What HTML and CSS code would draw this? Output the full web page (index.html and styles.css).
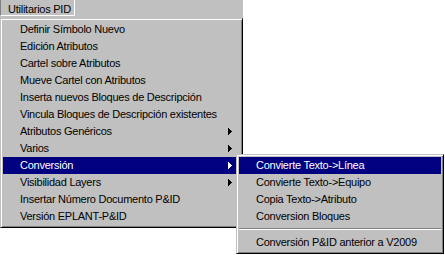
FILE: index.html
```html
<!DOCTYPE html>
<html lang="es">
<head>
<meta charset="utf-8">
<title>Utilitarios PID</title>
<link rel="stylesheet" href="styles.css">
</head>
<body>
<div class="screen">
  <div class="bar">
    <div class="bar-item">Utilitarios PID</div>
  </div>
  <div class="menu main-menu">
    <div class="item">Definir Símbolo Nuevo</div>
    <div class="item">Edición Atributos</div>
    <div class="item">Cartel sobre Atributos</div>
    <div class="item">Mueve Cartel con Atributos</div>
    <div class="item">Inserta nuevos Bloques de Descripción</div>
    <div class="item">Vincula Bloques de Descripción existentes</div>
    <div class="item">Atributos Genéricos<svg class="arrow" width="4" height="7" viewBox="0 0 4 7"><rect x="0" y="0" width="1" height="7"/><rect x="1" y="1" width="1" height="5"/><rect x="2" y="2" width="1" height="3"/><rect x="3" y="3" width="1" height="1"/></svg></div>
    <div class="item">Varios<svg class="arrow" width="4" height="7" viewBox="0 0 4 7"><rect x="0" y="0" width="1" height="7"/><rect x="1" y="1" width="1" height="5"/><rect x="2" y="2" width="1" height="3"/><rect x="3" y="3" width="1" height="1"/></svg></div>
    <div class="item active">Conversión<svg class="arrow" width="4" height="7" viewBox="0 0 4 7"><rect x="0" y="0" width="1" height="7"/><rect x="1" y="1" width="1" height="5"/><rect x="2" y="2" width="1" height="3"/><rect x="3" y="3" width="1" height="1"/></svg></div>
    <div class="item">Visibilidad Layers<svg class="arrow" width="4" height="7" viewBox="0 0 4 7"><rect x="0" y="0" width="1" height="7"/><rect x="1" y="1" width="1" height="5"/><rect x="2" y="2" width="1" height="3"/><rect x="3" y="3" width="1" height="1"/></svg></div>
    <div class="item">Insertar Número Documento P&amp;ID</div>
    <div class="item">Versión EPLANT-P&amp;ID</div>
  </div>
  <div class="menu sub-menu">
    <div class="item active">Convierte Texto-&gt;Línea</div>
    <div class="item">Convierte Texto-&gt;Equipo</div>
    <div class="item">Copia Texto-&gt;Atributo</div>
    <div class="item">Conversion Bloques</div>
    <div class="separator"></div>
    <div class="item">Conversión P&amp;ID anterior a V2009</div>
  </div>
</div>
</body>
</html>
```
FILE: styles.css
```css
html, body {
  margin: 0;
  padding: 0;
  background: #ffffff;
}

.screen {
  position: relative;
  width: 445px;
  height: 255px;
  overflow: hidden;
  background: #ffffff;
  font-family: "Liberation Sans", Arial, sans-serif;
  font-size: 11px;
  letter-spacing: -0.25px;
  color: #000000;
}

.bar {
  width: 243px;
  height: 18px;
  background: #c0c0c0;
}

.bar-item {
  box-sizing: border-box;
  width: 75px;
  height: 16px;
  padding: 3px 0 0 7px;
  line-height: 12px;
  border-left: 1px solid #808080;
  border-right: 1px solid #ffffff;
  border-bottom: 1px solid #ffffff;
  white-space: nowrap;
}

.menu {
  box-sizing: border-box;
  background: #c0c0c0;
  border: 1px solid;
  border-color: #c0c0c0 #000000 #000000 #c0c0c0;
  box-shadow: inset 1px 1px 0 #ffffff, inset -1px -1px 0 #808080;
  padding: 2px;
}

.main-menu {
  width: 243px;
}

.sub-menu {
  position: absolute;
  left: 236px;
  top: 154px;
  width: 208px;
}

.item {
  display: flex;
  align-items: center;
  height: 17px;
  line-height: 17px;
  padding-left: 17px;
  white-space: nowrap;
}

.item.active {
  background: #000080;
  color: #ffffff;
}

.arrow {
  display: block;
  margin-left: auto;
  margin-right: 8px;
  fill: #000000;
}

.item.active .arrow {
  fill: #ffffff;
}

.separator {
  height: 9px;
  box-sizing: border-box;
  padding-top: 3px;
}

.separator::before {
  content: "";
  display: block;
  height: 1px;
  background: #808080;
  border-bottom: 1px solid #ffffff;
}
```
